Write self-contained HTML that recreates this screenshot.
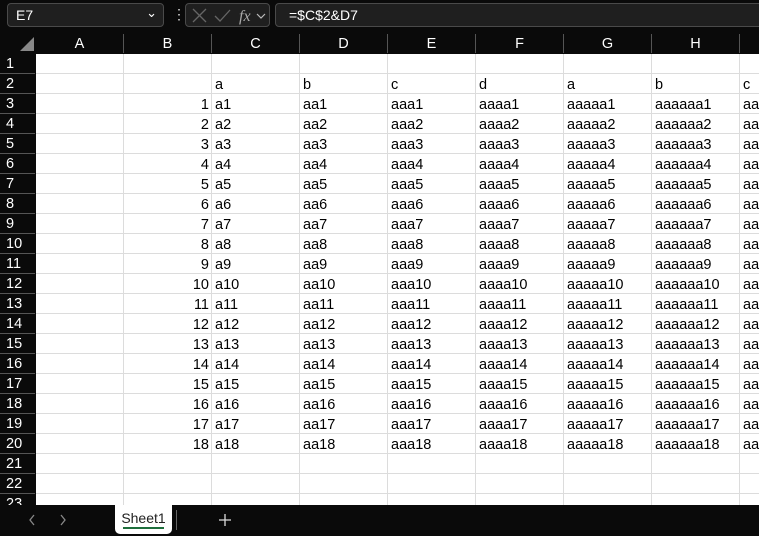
<!DOCTYPE html>
<html><head><meta charset="utf-8"><style>
*{margin:0;padding:0;box-sizing:border-box}
body{width:759px;height:536px;overflow:hidden;background:#0a0a0a;font-family:"Liberation Sans",Arial,sans-serif;position:relative}
.box{position:absolute;top:3px;height:24px;border:1px solid #4a4a4a;border-radius:4px;background:#1f1f1f;color:#fff;font-size:14px}
#gw{position:absolute;left:36px;top:54px;width:723px;height:451px;background:#fff;overflow:hidden}
#grid{border-collapse:separate;border-spacing:0;table-layout:fixed;width:792px}
#grid td{width:88px;height:20px;border-right:1px solid #dcdcdc;border-bottom:1px solid #dcdcdc;font-size:14.5px;color:#000;padding:3px 0 0 3px;white-space:nowrap;overflow:hidden;line-height:15px}
#grid td.n{text-align:right;padding-right:2px}
.ch{position:absolute;top:34px;height:19px;background:#0a0a0a;color:#fff;font-size:14.5px;text-align:center;line-height:20px;border-right:1px solid #555}
.rh{position:absolute;left:0;width:35px;height:20px;color:#fff;font-size:14.5px;line-height:20px;padding-left:6px;border-bottom:1px solid #555}
#tabs{position:absolute;left:0;top:505px;width:759px;height:31px;background:#0a0a0a}
</style></head><body>
<div class="box" style="left:7px;width:157px;padding:3px 8px">E7<span style="position:absolute;right:6px;top:1px;font-size:13px">&#8964;</span></div>
<div style="position:absolute;left:172px;top:6px;color:#ddd;font-size:14px">&#8942;</div>
<div class="box" style="left:185px;width:85px;color:#777">
<svg width="85" height="24" style="position:absolute;left:0;top:0"><path d="M7 5l13 13M20 5L7 18" stroke="#666" stroke-width="1.3"/><path d="M29 12l5 5 10-11" stroke="#666" stroke-width="1.3" fill="none"/><text x="53" y="17" font-family="Liberation Serif" font-style="italic" font-size="16" fill="#aaa">fx</text><path d="M71 10l4 4 4-4" stroke="#bbb" fill="none" stroke-width="1.2"/></svg></div>
<div class="box" style="left:275px;width:500px;padding:3px 13px">=$C$2&amp;D7</div>
<svg style="position:absolute;left:20px;top:37px" width="14" height="14"><path d="M14 0V14H0Z" fill="#888"/></svg>
<div class="ch" style="left:36px;width:88px">A</div>
<div class="ch" style="left:124px;width:88px">B</div>
<div class="ch" style="left:212px;width:88px">C</div>
<div class="ch" style="left:300px;width:88px">D</div>
<div class="ch" style="left:388px;width:88px">E</div>
<div class="ch" style="left:476px;width:88px">F</div>
<div class="ch" style="left:564px;width:88px">G</div>
<div class="ch" style="left:652px;width:88px">H</div>
<div class="ch" style="left:740px;width:88px"></div>
<div class="rh" style="top:54px">1</div><div class="rh" style="top:74px">2</div><div class="rh" style="top:94px">3</div><div class="rh" style="top:114px">4</div><div class="rh" style="top:134px">5</div><div class="rh" style="top:154px">6</div><div class="rh" style="top:174px">7</div><div class="rh" style="top:194px">8</div><div class="rh" style="top:214px">9</div><div class="rh" style="top:234px">10</div><div class="rh" style="top:254px">11</div><div class="rh" style="top:274px">12</div><div class="rh" style="top:294px">13</div><div class="rh" style="top:314px">14</div><div class="rh" style="top:334px">15</div><div class="rh" style="top:354px">16</div><div class="rh" style="top:374px">17</div><div class="rh" style="top:394px">18</div><div class="rh" style="top:414px">19</div><div class="rh" style="top:434px">20</div><div class="rh" style="top:454px">21</div><div class="rh" style="top:474px">22</div><div class="rh" style="top:494px">23</div>
<div id="gw"><table id="grid">
<tr><td></td><td></td><td></td><td></td><td></td><td></td><td></td><td></td><td></td></tr>
<tr><td></td><td></td><td>a</td><td>b</td><td>c</td><td>d</td><td>a</td><td>b</td><td>c</td></tr>
<tr><td></td><td class="n">1</td><td>a1</td><td>aa1</td><td>aaa1</td><td>aaaa1</td><td>aaaaa1</td><td>aaaaaa1</td><td>aa</td></tr>
<tr><td></td><td class="n">2</td><td>a2</td><td>aa2</td><td>aaa2</td><td>aaaa2</td><td>aaaaa2</td><td>aaaaaa2</td><td>aa</td></tr>
<tr><td></td><td class="n">3</td><td>a3</td><td>aa3</td><td>aaa3</td><td>aaaa3</td><td>aaaaa3</td><td>aaaaaa3</td><td>aa</td></tr>
<tr><td></td><td class="n">4</td><td>a4</td><td>aa4</td><td>aaa4</td><td>aaaa4</td><td>aaaaa4</td><td>aaaaaa4</td><td>aa</td></tr>
<tr><td></td><td class="n">5</td><td>a5</td><td>aa5</td><td>aaa5</td><td>aaaa5</td><td>aaaaa5</td><td>aaaaaa5</td><td>aa</td></tr>
<tr><td></td><td class="n">6</td><td>a6</td><td>aa6</td><td>aaa6</td><td>aaaa6</td><td>aaaaa6</td><td>aaaaaa6</td><td>aa</td></tr>
<tr><td></td><td class="n">7</td><td>a7</td><td>aa7</td><td>aaa7</td><td>aaaa7</td><td>aaaaa7</td><td>aaaaaa7</td><td>aa</td></tr>
<tr><td></td><td class="n">8</td><td>a8</td><td>aa8</td><td>aaa8</td><td>aaaa8</td><td>aaaaa8</td><td>aaaaaa8</td><td>aa</td></tr>
<tr><td></td><td class="n">9</td><td>a9</td><td>aa9</td><td>aaa9</td><td>aaaa9</td><td>aaaaa9</td><td>aaaaaa9</td><td>aa</td></tr>
<tr><td></td><td class="n">10</td><td>a10</td><td>aa10</td><td>aaa10</td><td>aaaa10</td><td>aaaaa10</td><td>aaaaaa10</td><td>aa</td></tr>
<tr><td></td><td class="n">11</td><td>a11</td><td>aa11</td><td>aaa11</td><td>aaaa11</td><td>aaaaa11</td><td>aaaaaa11</td><td>aa</td></tr>
<tr><td></td><td class="n">12</td><td>a12</td><td>aa12</td><td>aaa12</td><td>aaaa12</td><td>aaaaa12</td><td>aaaaaa12</td><td>aa</td></tr>
<tr><td></td><td class="n">13</td><td>a13</td><td>aa13</td><td>aaa13</td><td>aaaa13</td><td>aaaaa13</td><td>aaaaaa13</td><td>aa</td></tr>
<tr><td></td><td class="n">14</td><td>a14</td><td>aa14</td><td>aaa14</td><td>aaaa14</td><td>aaaaa14</td><td>aaaaaa14</td><td>aa</td></tr>
<tr><td></td><td class="n">15</td><td>a15</td><td>aa15</td><td>aaa15</td><td>aaaa15</td><td>aaaaa15</td><td>aaaaaa15</td><td>aa</td></tr>
<tr><td></td><td class="n">16</td><td>a16</td><td>aa16</td><td>aaa16</td><td>aaaa16</td><td>aaaaa16</td><td>aaaaaa16</td><td>aa</td></tr>
<tr><td></td><td class="n">17</td><td>a17</td><td>aa17</td><td>aaa17</td><td>aaaa17</td><td>aaaaa17</td><td>aaaaaa17</td><td>aa</td></tr>
<tr><td></td><td class="n">18</td><td>a18</td><td>aa18</td><td>aaa18</td><td>aaaa18</td><td>aaaaa18</td><td>aaaaaa18</td><td>aa</td></tr>
<tr><td></td><td></td><td></td><td></td><td></td><td></td><td></td><td></td><td></td></tr>
<tr><td></td><td></td><td></td><td></td><td></td><td></td><td></td><td></td><td></td></tr>
<tr><td></td><td></td><td></td><td></td><td></td><td></td><td></td><td></td><td></td></tr>
</table></div>
<div id="tabs">
<svg width="100" height="31" style="position:absolute;left:0;top:0"><path d="M34 10l-4 5 4 5M61 10l4 5-4 5" stroke="#888" stroke-width="1.3" fill="none"/></svg>
<div style="position:absolute;left:115px;top:0;width:57px;height:29px;background:#fff;border-radius:0 0 5px 5px;font-size:14px;color:#222;text-align:center;line-height:26px">Sheet1<div style="position:absolute;left:8px;right:8px;bottom:5px;height:2px;background:#1e6e3c"></div></div>
<div style="position:absolute;left:176px;top:5px;width:1px;height:20px;background:#666"></div>
<svg width="14" height="14" style="position:absolute;left:218px;top:8px"><path d="M7 1v12M1 7h12" stroke="#ddd" stroke-width="1.3"/></svg>
</div>
</body></html>
